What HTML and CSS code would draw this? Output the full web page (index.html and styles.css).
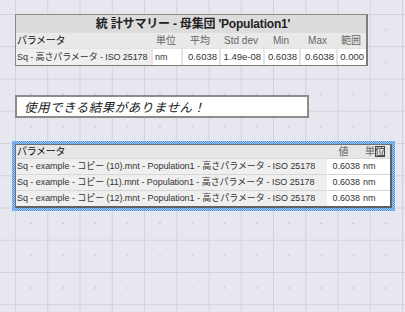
FILE: index.html
```html
<!DOCTYPE html>
<html lang="ja">
<head>
<meta charset="utf-8">
<link rel="stylesheet" href="styles.css">
</head>
<body>
<div class="canvas">
  <div class="summary">
    <div class="title">統 計サマリー - 母集団 'Population1'</div>
    <div class="row head">
      <div class="c c-param">パラメータ</div>
      <div class="c c-mid">単位</div>
      <div class="c c-mid">平均</div>
      <div class="c c-mid">Std dev</div>
      <div class="c c-mid">Min</div>
      <div class="c c-mid">Max</div>
      <div class="c c-mid">範囲</div>
    </div>
    <div class="row data">
      <div class="c c-param">Sq - 高さパラメータ - ISO 25178</div>
      <div class="c c-unit">nm</div>
      <div class="c c-num">0.6038</div>
      <div class="c c-num">1.49e-08</div>
      <div class="c c-num">0.6038</div>
      <div class="c c-num">0.6038</div>
      <div class="c c-num">0.000</div>
    </div>
  </div>

  <div class="message">使用できる結果がありません！</div>

  <div class="selection">
    <div class="list">
      <div class="lrow lhead">
        <div class="l-param">パラメータ</div>
        <div class="l-val">値</div>
        <div class="l-unit">単<span class="caret">位</span></div>
      </div>
      <div class="lrow">
        <div class="l-param">Sq - example - コピー (10).mnt - Population1 - 高さパラメータ - ISO 25178</div>
        <div class="l-val">0.6038</div>
        <div class="l-unit">nm</div>
      </div>
      <div class="lrow">
        <div class="l-param">Sq - example - コピー (11).mnt - Population1 - 高さパラメータ - ISO 25178</div>
        <div class="l-val">0.6038</div>
        <div class="l-unit">nm</div>
      </div>
      <div class="lrow">
        <div class="l-param">Sq - example - コピー (12).mnt - Population1 - 高さパラメータ - ISO 25178</div>
        <div class="l-val">0.6038</div>
        <div class="l-unit">nm</div>
      </div>
    </div>
  </div>
</div>
</body>
</html>
```
FILE: styles.css
```css
html, body {
  margin: 0;
  padding: 0;
}
body {
  width: 405px;
  height: 312px;
  overflow: hidden;
  background-color: #e7e7ef;
  background-image:
    radial-gradient(circle at 16px 16px, #c4c4cc 0.7px, transparent 1.2px),
    linear-gradient(to right, #d2d2db 1px, transparent 1px),
    linear-gradient(to bottom, #d2d2db 1px, transparent 1px);
  background-size: 32.25px 32.25px;
  background-position: 15px 14px;
  font-family: "Liberation Sans", "Noto Sans CJK JP", sans-serif;
  color: #333;
}
.canvas {
  display: flex;
  flex-direction: column;
  align-items: flex-start;
  padding: 14px 0 0 12px;
}

/* Summary table */
.summary {
  margin-left: 3px;
  width: 350px;
  border: 1px solid #8a8a8a;
  border-right: 2px solid #7c7c7c;
  border-bottom: 2px solid #7c7c7c;
  background: #e6e6e6;
}
.title {
  height: 18px;
  line-height: 19px;
  background: #dcdcdc;
  text-align: center;
  font-weight: bold;
  font-size: 12px;
  letter-spacing: -0.2px;
  color: #222;
  padding-left: 4px;
}
.row {
  display: grid;
  grid-template-columns: 135px 30px 38px 44px 36px 37px 30px;
}
.head {
  height: 15px;
  background: #e9e9e9;
  font-size: 10px;
  line-height: 15px;
  color: #666;
}
.head .c-param {
  color: #111;
  padding-left: 1px;
  letter-spacing: -0.3px;
}
.head .c-mid {
  text-align: center;
}
.data {
  height: 16px;
  font-size: 9px;
  line-height: 16px;
  color: #333;
}
.data .c {
  background: #fff;
  border-left: 2px solid #e4e4e4;
  border-top: 1px solid #e4e4e4;
  white-space: nowrap;
}
.data .c-param {
  background: #efefef;
  border-left: none;
  padding-left: 1px;
  letter-spacing: -0.1px;
}
.data .c-unit {
  padding-left: 2px;
}
.data .c-num {
  text-align: right;
  padding-right: 2px;
  font-size: 9.5px;
}

/* Message */
.message {
  margin: 29px 0 0 3px;
  width: 283px;
  height: 19px;
  border: 2px solid #8c8c8c;
  background: #fff;
  font-size: 12.5px;
  font-style: italic;
  line-height: 20px;
  letter-spacing: 0.5px;
  padding-left: 7px;
  color: #222;
  font-family: "Noto Sans CJK JP", sans-serif;
}

/* Selected list */
.selection {
  margin-top: 23px;
  padding: 3px;
  background: repeating-conic-gradient(#4a8fe0 0 25%, #a8cdf4 0 50%) 0 0 / 2px 2px;
}
.list {
  width: 374px;
  border: 1px solid #707070;
  border-right: 2px solid #606060;
  border-bottom: 2px solid #606060;
  background: #efefef;
}
.lrow {
  display: grid;
  grid-template-columns: 311px 35px 28px;
  height: 15px;
  line-height: 15px;
  font-size: 9px;
  letter-spacing: -0.05px;
  color: #333;
  border-top: 1px solid #d8d8d8;
  white-space: nowrap;
}
.lrow.lhead {
  height: 13px;
  line-height: 14px;
  border-top: none;
  background: #e6e6e6;
  font-size: 10px;
  letter-spacing: -0.3px;
}
.l-param {
  padding-left: 1px;
  overflow: hidden;
}
.lhead .l-param {
  color: #111;
}
.lhead .l-val,
.lhead .l-unit {
  color: #666;
  background: transparent;
}
.lhead .l-val {
  text-align: center;
}
.lhead .l-unit {
  padding-left: 3px;
  letter-spacing: 0;
}
.l-val {
  background: #fff;
  text-align: right;
  padding-right: 2px;
  letter-spacing: 0;
}
.l-unit {
  background: #fff;
  padding-left: 1px;
  letter-spacing: 0;
}
.caret {
  outline: 1px solid #444;
  outline-offset: -1px;
  color: #333;
}
```
